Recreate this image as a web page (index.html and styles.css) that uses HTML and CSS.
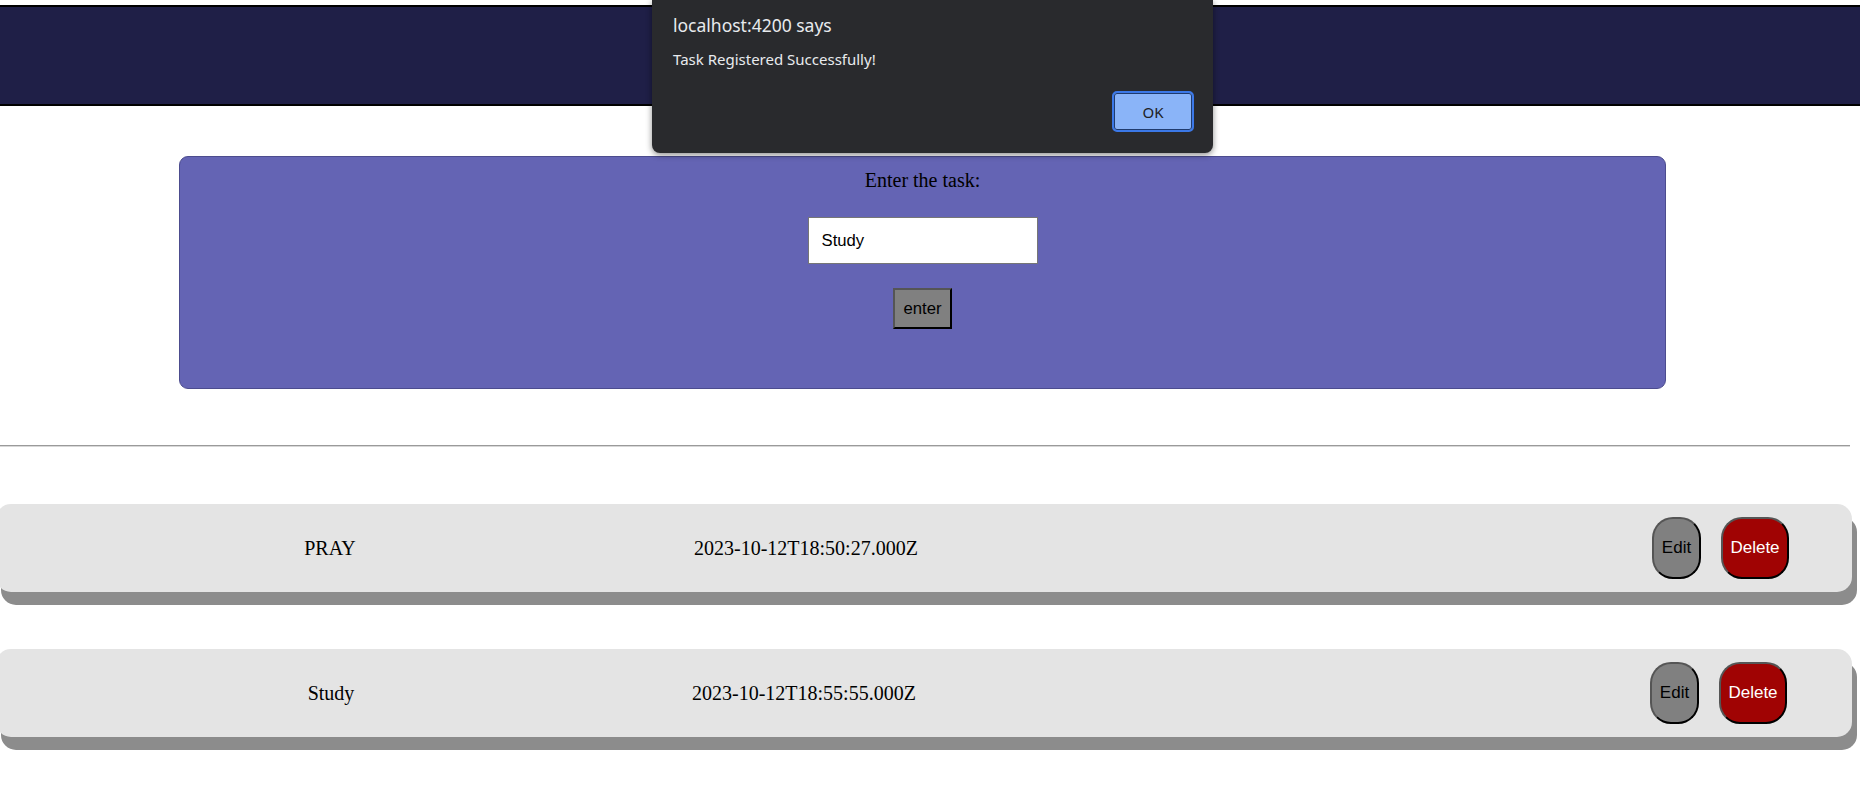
FILE: index.html
```html
<!DOCTYPE html>
<html>
<head>
<meta charset="utf-8">
<title>Tasks</title>
<link rel="stylesheet" href="styles.css">
</head>
<body>
<header class="topbar"></header>

<section class="task-form">
  <p class="form-label">Enter the task:</p>
  <input class="task-input" type="text" value="Study">
  <button class="enter-btn">enter</button>
</section>

<hr class="divider">

<div class="task-list">
  <div class="task-row">
    <span class="task-name">PRAY</span>
    <span class="task-date">2023-10-12T18:50:27.000Z</span>
    <div class="task-actions">
      <button class="btn-edit">Edit</button>
      <button class="btn-delete">Delete</button>
    </div>
  </div>
  <div class="task-row">
    <span class="task-name">Study</span>
    <span class="task-date">2023-10-12T18:55:55.000Z</span>
    <div class="task-actions">
      <button class="btn-edit">Edit</button>
      <button class="btn-delete">Delete</button>
    </div>
  </div>
</div>

<div class="alert-dialog">
  <div class="alert-title">localhost:4200 says</div>
  <div class="alert-message">Task Registered Successfully!</div>
  <div class="alert-footer">
    <button class="alert-ok">OK</button>
  </div>
</div>
</body>
</html>
```

FILE: styles.css
```css
html, body {
  margin: 0;
  padding: 0;
  background: #ffffff;
}

body {
  font-family: "Liberation Serif", "Times New Roman", serif;
  width: 1860px;
  height: 787px;
  overflow: hidden;
  position: relative;
}

.topbar {
  margin-top: 5px;
  height: 97px;
  background: #1f1f47;
  border-top: 2px solid #000;
  border-bottom: 2px solid #000;
}

.task-form {
  box-sizing: border-box;
  margin: 50px 0 0 179px;
  width: 1487px;
  height: 233px;
  background: #6464b4;
  border: 1px solid #4c4c8e;
  border-radius: 9px;
  display: flex;
  flex-direction: column;
  align-items: center;
}

.form-label {
  margin: 12px 0 0;
  font-size: 20px;
  line-height: 23px;
  color: #000;
}

.task-input {
  box-sizing: border-box;
  margin-top: 25px;
  width: 230px;
  height: 47px;
  border: 1px solid #767676;
  background: #fff;
  padding: 0 0 0 13px;
  font-family: "Liberation Sans", Arial, sans-serif;
  font-size: 16.7px;
  color: #000;
  outline: none;
}

.enter-btn {
  box-sizing: border-box;
  margin-top: 24px;
  width: 59px;
  height: 41px;
  padding: 0;
  background: #808080;
  border: 2px outset #555;
  border-right-color: #000;
  border-bottom-color: #000;
  font-family: "Liberation Sans", Arial, sans-serif;
  font-size: 16.7px;
  color: #000;
}

.divider {
  margin: 56px 0 0;
  width: 1850px;
  height: 0;
  border: 0;
  border-top: 1px solid #9a9a9a;
  border-bottom: 1px solid #d8d8d8;
}

.task-list {
  margin-top: 57px;
  margin-left: -4px;
  display: flex;
  flex-direction: column;
  gap: 57px;
  width: 1856px;
}

.task-row {
  box-sizing: border-box;
  height: 88px;
  background: #e4e4e4;
  border-radius: 15px;
  box-shadow: 5px 13px 0 #8c8c8c;
  display: flex;
  align-items: center;
  padding-left: 4px;
  font-size: 20px;
  color: #000;
}

.task-name {
  width: 660px;
  text-align: center;
}

.task-date {
  margin-left: 34px;
}

.task-actions {
  margin-left: auto;
  margin-right: 63px;
  display: flex;
  gap: 20px;
}

.btn-edit,
.btn-delete {
  box-sizing: border-box;
  height: 62px;
  padding: 0 6px;
  border-radius: 21px;
  border: 2px outset #555;
  border-right-color: #000;
  border-bottom-color: #000;
  font-family: "Liberation Sans", Arial, sans-serif;
  font-size: 17px;
}

.btn-edit {
  width: 49px;
  background: #808080;
  color: #000;
}

.btn-delete {
  width: 68px;
  background: #a00303;
  color: #fff;
}

.task-row + .task-row .task-name {
  width: 662px;
}

.task-row + .task-row .task-date {
  margin-left: 30px;
}

.task-row + .task-row .task-actions {
  margin-right: 65px;
}

.alert-dialog {
  position: absolute;
  top: 0;
  left: 652px;
  width: 561px;
  height: 153px;
  box-sizing: border-box;
  background: #292a2d;
  border-radius: 0 0 8px 8px;
  box-shadow: 0 2px 6px rgba(0, 0, 0, 0.45);
  padding: 10px 19px 0 21px;
  font-family: "Noto Sans", "Open Sans", sans-serif;
  color: #e8eaed;
}

.alert-title {
  font-size: 17.5px;
  line-height: 30px;
}

.alert-message {
  margin-top: 9px;
  font-size: 15px;
  line-height: 21px;
}

.alert-footer {
  display: flex;
  justify-content: flex-end;
  margin-top: 21px;
}

.alert-ok {
  box-sizing: border-box;
  width: 82px;
  height: 41px;
  background: #8ab4f8;
  border: 2px solid #3b78e7;
  border-radius: 5px;
  box-shadow: inset 0 0 0 1px #1f3b6e;
  font-family: "Noto Sans", "Open Sans", sans-serif;
  font-size: 15px;
  color: #202124;
}
```
